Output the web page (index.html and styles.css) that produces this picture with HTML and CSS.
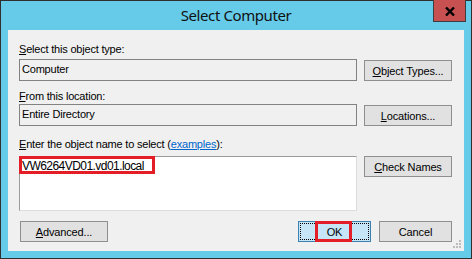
FILE: index.html
```html
<!DOCTYPE html>
<html lang="en">
<head>
    <meta charset="UTF-8">
    <title>Select Computer</title>
    <link rel="stylesheet" href="styles.css">
</head>
<body>
    <div class="window">
        <div class="titlebar">
            <span class="title">Select Computer</span>
            <button class="close-btn" title="Close">
                <svg width="10" height="9" viewBox="0 0 10 9">
                    <path d="M1 0.5 L9 8.5 M9 0.5 L1 8.5" stroke="#000" stroke-width="2.4" fill="none"/>
                </svg>
            </button>
        </div>

        <div class="client">
            <div class="label label-first"><u>S</u>elect this object type:</div>
            <div class="row">
                <div class="textbox">Computer</div>
                <button class="btn"><u>O</u>bject Types...</button>
            </div>

            <div class="label label-second"><u>F</u>rom this location:</div>
            <div class="row">
                <div class="textbox">Entire Directory</div>
                <button class="btn"><u>L</u>ocations...</button>
            </div>

            <div class="label label-third"><u>E</u>nter the object name to select (<a href="#" class="link">examples</a>):</div>
            <div class="row name-row">
                <div class="namebox">
                    <span class="highlight">VW6264VD01.vd01.local</span>
                </div>
                <button class="btn"><u>C</u>heck Names</button>
            </div>

            <div class="footer">
                <button class="btn"><u>A</u>dvanced...</button>
                <div class="footer-right">
                    <button class="btn btn-small btn-default">OK<span class="mark"></span></button>
                    <button class="btn btn-small">Cancel</button>
                </div>
            </div>

            <svg class="grip" width="10" height="10" viewBox="0 0 10 10">
                <rect x="7" y="1" width="2" height="2" fill="#bdbdbd"/>
                <rect x="4" y="4" width="2" height="2" fill="#bdbdbd"/>
                <rect x="7" y="4" width="2" height="2" fill="#bdbdbd"/>
                <rect x="1" y="7" width="2" height="2" fill="#bdbdbd"/>
                <rect x="4" y="7" width="2" height="2" fill="#bdbdbd"/>
                <rect x="7" y="7" width="2" height="2" fill="#bdbdbd"/>
            </svg>
        </div>
    </div>
</body>
</html>
```

FILE: styles.css
```css
* {
    margin: 0;
    padding: 0;
    box-sizing: border-box;
}

body {
    font-family: "Liberation Sans", Arial, sans-serif;
    font-size: 11px;
    color: #000;
    background-color: #fff;
}

.window {
    width: 472px;
    height: 259px;
    border: 1px solid #2f2f2f;
    background-color: #65cbe9;
    padding: 0 7px 7px;
    display: flex;
    flex-direction: column;
}

.titlebar {
    height: 29px;
    position: relative;
    display: flex;
    justify-content: center;
}

.title {
    font-family: "Noto Sans", "Liberation Sans", sans-serif;
    font-size: 15px;
    letter-spacing: -0.4px;
    line-height: 20px;
    padding-top: 4px;
    color: #111;
}

.close-btn {
    position: absolute;
    top: -1px;
    right: -2px;
    width: 33px;
    height: 22px;
    background-color: #c75050;
    border: 1px solid #3d3d3d;
    border-top: none;
    display: flex;
    align-items: center;
    justify-content: center;
    padding-top: 1px;
}

.client {
    flex: 1;
    position: relative;
    background-color: #f0f0f0;
    padding: 13px 12px 0 11px;
}

.label {
    height: 13px;
    line-height: 13px;
    white-space: nowrap;
    letter-spacing: -0.2px;
}

.label-first {
    margin-bottom: 3px;
}

.label-second {
    margin-top: 9px;
    margin-bottom: 1px;
}

.label-third {
    margin-top: 12px;
    margin-bottom: 5px;
}

.link {
    color: #0066cc;
}

.row {
    display: flex;
    gap: 7px;
    align-items: flex-start;
}

.textbox {
    width: 338px;
    height: 22px;
    border: 1px solid #828282;
    padding-left: 2px;
    line-height: 19px;
    letter-spacing: -0.2px;
}

.btn {
    width: 88px;
    height: 21px;
    margin-top: 1px;
    font-family: "Liberation Sans", Arial, sans-serif;
    font-size: 11px;
    letter-spacing: -0.15px;
    color: #000;
    background-color: #e1e1e1;
    border: 1px solid #8f8f8f;
    position: relative;
}

.name-row .btn {
    margin-top: 0;
}

.namebox {
    width: 338px;
    height: 55px;
    background-color: #fff;
    border: 1px solid #dcdcdc;
    border-top-color: #9a9a9a;
    border-left-color: #9a9a9a;
}

.highlight {
    display: block;
    width: 136px;
    height: 18px;
    margin: -1px 0 0 -1px;
    border: 3px solid #e41e26;
    padding-top: 1px;
    font-size: 12px;
    line-height: 12px;
    letter-spacing: -0.55px;
    white-space: nowrap;
}

.footer {
    margin-top: 10px;
    padding-left: 1px;
    display: flex;
    justify-content: space-between;
}

.footer .btn {
    margin-top: 0;
}

.footer-right {
    display: flex;
    gap: 8px;
}

.btn-small {
    width: 73px;
}

.btn-default {
    background-color: #c6e6f8;
    border-color: #3c7fb1;
}

.btn-default::before {
    content: "";
    position: absolute;
    top: 1px;
    left: 1px;
    right: 1px;
    bottom: 1px;
    border: 1px dotted #000;
}

.mark {
    position: absolute;
    top: -1px;
    bottom: -1px;
    left: 16px;
    width: 37px;
    border: 3px solid #e41e26;
}

.grip {
    position: absolute;
    right: 2px;
    bottom: 2px;
}
```
